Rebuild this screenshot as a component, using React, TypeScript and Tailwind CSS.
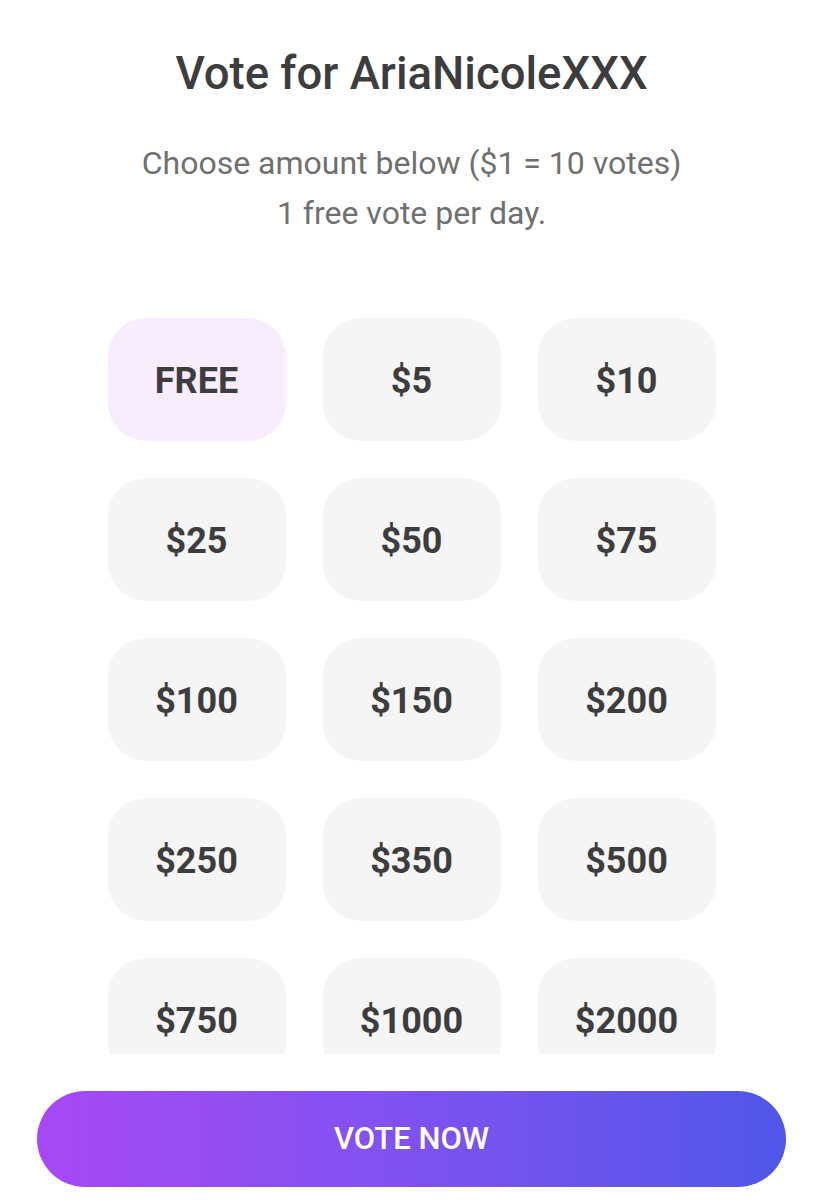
const amounts = [
  'FREE', '$5', '$10',
  '$25', '$50', '$75',
  '$100', '$150', '$200',
  '$250', '$350', '$500',
  '$750', '$1000', '$2000',
];

export default function App() {
  return (
    <div className="flex h-[1200px] w-[823px] flex-col bg-white font-['Roboto',sans-serif]">
      <h1 className="mt-[46px] text-center text-[45.5px] leading-[56px] font-medium text-[#3d3d3d]">
        Vote for AriaNicoleXXX
      </h1>
      <div className="mt-[36px] text-center text-[32px] leading-[50px] text-[#707070]">
        <p>Choose amount below ($1 = 10 votes)</p>
        <p>1 free vote per day.</p>
      </div>

      <div className="mt-[80px] h-[736px] overflow-hidden">
        <div className="mx-auto grid w-[608px] grid-cols-3 gap-[37px]">
          {amounts.map((amount, i) => (
            <button
              key={amount}
              className={`flex h-[123px] items-center justify-center rounded-[38px] pt-[3px] text-[36px] font-bold text-[#3d3d3d] ${
                i === 0 ? 'bg-[#f8edfe]' : 'bg-[#f5f5f5]'
              }`}
            >
              {amount}
            </button>
          ))}
        </div>
      </div>

      <div className="mt-[37px] px-[37px]">
        <button className="flex h-[96px] w-full items-center justify-center rounded-full bg-gradient-to-r from-[#a748f5] to-[#4f56ea] text-[31px] font-medium text-white">
          VOTE NOW
        </button>
      </div>
    </div>
  );
}
